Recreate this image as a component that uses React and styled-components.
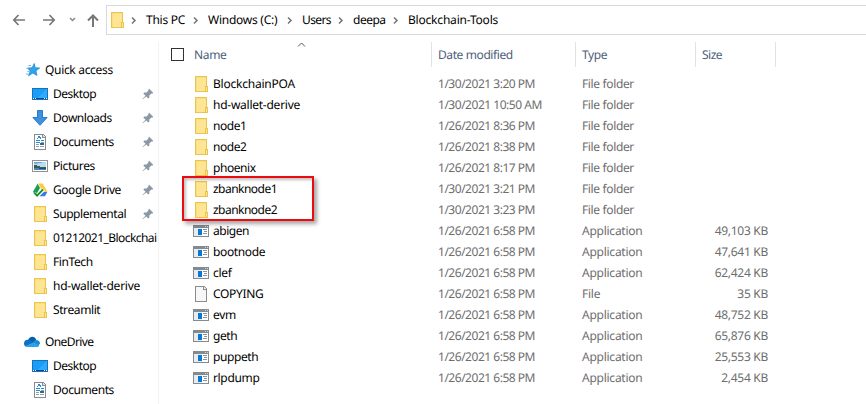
import React from "react";
import styled, { createGlobalStyle } from "styled-components";

const GlobalStyle = createGlobalStyle`
  * { box-sizing: border-box; }
  body { margin: 0; background: #fff; overflow: hidden; }
`;

const Window = styled.div`
  width: 866px;
  height: 404px;
  overflow: hidden;
  display: flex;
  flex-direction: column;
  background: #fff;
  color: #000;
  font: 12px/20px "Noto Sans", "Open Sans", sans-serif;
  text-rendering: geometricPrecision;
  white-space: pre;
`;

const Label = styled.span`
  letter-spacing: ${(p) => p.$track || 0}px;
`;

const Toolbar = styled.header`
  flex: none;
  display: flex;
  height: 42px;
  padding-top: 5px;
`;

const NavButtons = styled.div`
  width: 106px;
  height: 30px;
  flex: none;
`;

const AddressBar = styled.div`
  flex: none;
  display: flex;
  align-items: center;
  width: 770px;
  height: 30px;
  padding-left: 2px;
  border: 1px solid #d9d9d9;
`;

const Crumb = styled.div`
  display: flex;
  align-items: center;
  flex: none;
  width: ${(p) => p.$width}px;
`;

const CrumbArrow = styled.svg`
  flex: none;
  width: 15px;
  height: 16px;
`;

const Body = styled.div`
  flex: 1;
  display: flex;
  min-height: 0;
`;

const Sidebar = styled.nav`
  flex: none;
  width: 159px;
  border-right: 1px solid #f2f2f2;
  padding-top: 16px;
`;

const SideGroup = styled.section`
  margin-bottom: 8px;
`;

const SideRow = styled.div`
  display: flex;
  align-items: center;
  height: 24px;
  padding-left: ${(p) => (p.$root ? 24 : 32)}px;
  padding-right: 1px;
`;

const SideText = styled.div`
  flex: 1;
  min-width: 0;
  margin-left: 5px;
  letter-spacing: ${(p) => p.$track || 0}px;
`;

const Icon = styled.svg`
  display: block;
  flex: none;
  width: 16px;
  height: 16px;
`;

const PinIcon = styled.svg`
  flex: none;
  width: 12px;
  height: 12px;
  margin-right: 3px;
`;

const Main = styled.main`
  position: relative;
  flex: 1;
  min-width: 0;
`;

const columns = "273px 144px 120px 80px";

const HeaderRow = styled.div`
  display: grid;
  grid-template-columns: ${columns};
  height: 25px;
  color: #4c607a;
`;

const HeaderCell = styled.div`
  display: flex;
  align-items: center;
  padding-left: ${(p) => (p.$first ? 12 : 6)}px;
  border-right: 1px solid #e2e2e2;
  letter-spacing: ${(p) => p.$track || 0}px;
`;

const Checkbox = styled.span`
  width: 13px;
  height: 13px;
  border: 1px solid #333;
  margin-right: 10px;
`;

const SortMark = styled.svg`
  position: absolute;
  left: 138px;
  top: 0;
  width: 9px;
  height: 5px;
`;

const FileList = styled.div`
  padding-top: 6px;
`;

const FileRow = styled.div`
  display: grid;
  grid-template-columns: ${columns};
  height: 21px;
  align-items: center;
  color: #6d6d6d;
`;

const NameCell = styled.div`
  display: flex;
  align-items: center;
  gap: 4px;
  padding-left: 34px;
  color: #000;
`;

const Cell = styled.div`
  padding-left: 6px;
  letter-spacing: ${(p) => p.$track || 0}px;
`;

const SizeCell = styled(Cell)`
  padding: 0 8px 0 0;
  text-align: right;
`;

const Highlight = styled.div`
  position: absolute;
  left: 23px;
  top: 134px;
  width: 132px;
  height: 45px;
  border: 2px solid #ec0b10;
  box-shadow: 3px 3px 4px rgba(0, 0, 0, 0.35), inset 2px 2px 3px rgba(0, 0, 0, 0.25);
`;

const Folder = () => (
  <Icon viewBox="0 0 16 16" shapeRendering="crispEdges">
    <path d="M2 0h12v10h1v6H2z" fill="#e9c54d" />
    <path d="M3 1h10v9h-1v5H3z" fill="#fee594" />
    <path d="M3 1h10v1H3zM3 2h1v13H3z" fill="#fdde7e" />
    <path d="M13 11h1v4h-1z" fill="#fde79d" />
  </Icon>
);

const Desktop = () => (
  <Icon viewBox="0 0 16 16" shapeRendering="crispEdges">
    <path d="M0 2h16v12H0z" fill="#1673b8" />
    <path d="M1 3h14v9H1z" fill="#189dfc" />
    <path d="M15 3v9H5z" fill="#34a9fb" />
    <path d="M1 12h14v1H1z" fill="#064b87" />
    <path d="M1 12h1v1H1zM3 12h1v1H3zM12 12h1v1h-1zM14 12h1v1h-1z" fill="#fff" />
  </Icon>
);

const Download = () => (
  <Icon viewBox="0 0 16 16">
    <path d="M5.5.5h5v7h4.6L8 15.3.9 7.5h4.6z" fill="#3c92e1" stroke="#2b7bc7" />
  </Icon>
);

const Document = () => (
  <Icon viewBox="0 0 16 16" shapeRendering="crispEdges">
    <path d="M2 0h9l3 3v13H2z" fill="#858b8f" />
    <path d="M3 1h7v3h3v11H3z" fill="#fff" />
    <path d="M11 1h1v1h1v1h-2z" fill="#e4e5e6" />
    <path d="M6 2h2v2H6zM5 4h1v1H5zM8 3h1v2H8zM4 6h4v1H4zM4 8h4v1H4zM9 6h3v1H9z" fill="#238bd7" />
    <path d="M9 8h3v1H9zM4 10h3v1H4zM4 12h3v1H4zM8 12h4v1H8z" fill="#8fa0ad" />
    <path d="M8 9h4v2H8z" fill="#366789" />
  </Icon>
);

const Pictures = () => (
  <Icon viewBox="0 0 16 16" shapeRendering="crispEdges">
    <path d="M0 2h16v12H0z" fill="#929292" />
    <path d="M1 3h14v10H1z" fill="#fff" />
    <path d="M2 4h12v8H2z" fill="#b9dcf5" />
    <path d="M2 4h8v1H2z" fill="#6a9fe0" />
    <path d="M2 5h4v1H2z" fill="#87b7ec" />
    <path d="M2 7h3v1h3v1h6v1H2z" fill="#365e4b" />
    <path d="M2 10h12v2H2z" fill="#4b83bb" />
    <path d="M7 10h7v1H7z" fill="#244e67" />
  </Icon>
);

const Drive = () => (
  <Icon viewBox="0 0 16 16">
    <path d="M6 1.5h4.7L15.6 10h-4.7z" fill="#ffc944" />
    <path d="M5.6 1.8 8 6 3.5 13.8 1 9.8z" fill="#199c59" />
    <path d="M7.3 10h8L13 14.2H5z" fill="#3b79e4" />
    <path d="m2 11 3.200 3 6.500-6.500" fill="none" stroke="#fff" strokeWidth="3.600" />
    <path d="m2.3 10.6 2.8 3 6-6.200" fill="none" stroke="#159326" strokeWidth="2" />
  </Icon>
);

const Star = () => (
  <Icon viewBox="0 0 16 16">
    <path d="m10.2 1.5 1 4.2 4.5.3-3.7 2.7.9 4.7-4-2.3-4.4 2.7 1.8-4.7L3.5 6l4.6-.2z" fill="#2ea5ed" stroke="#187fc9" strokeWidth=".7" />
    <path d="M4.5 3.5H7M2.5 6.5h2M3.5 9.5h2M2 12h2.5" stroke="#64b7e9" />
  </Icon>
);

const Cloud = () => (
  <Icon viewBox="0 0 16 16">
    <path d="M4 6.2C5.3 1.8 11 1.4 12.4 6.3L8 10z" fill="#0a5cac" />
    <path d="M3.6 5.8C1.5 5.9 0 7.4 0 9.6c0 1.2.5 2.2 1.4 2.8L10 8.6 7 6.8c-1-.7-2.2-1-3.4-1z" fill="#0f6fc5" />
    <path d="M12 6c2.300 0 4 1.500 4 3.500L14 12 9.200 8.300C9.800 6.900 10.800 6 12 6z" fill="#168bdb" />
    <path d="M1.200 12.200 9.300 8.500l5.900 3c-.5 1-1.300 1.500-2.400 1.500H3.600c-1 0-1.800-.3-2.400-.8z" fill="#27a3eb" />
  </Icon>
);

const AppFile = () => (
  <Icon viewBox="0 0 16 16" shapeRendering="crispEdges">
    <path d="M0 2h16v12H0z" fill="#848a8e" />
    <path d="M1 5h14v8H1z" fill="#e9ecef" />
    <path d="M9 5h6v8H9z" fill="#fff" />
    <path d="M12 3h1v1h-1zM14 3h1v1h-1z" fill="#d5d8da" />
    <path d="M5 6h4v6H5z" fill="#0878d8" />
    <path d="M10 6h4v1h-4zM11 8h3v1h-3zM10 10h4v1h-4z" fill="#8c9296" />
  </Icon>
);

const BlankFile = () => (
  <Icon viewBox="0 0 16 16" shapeRendering="crispEdges">
    <path d="M2 0h9l3 3v13H2z" fill="#8c8c8c" />
    <path d="M3 1h7v3h3v11H3z" fill="#f7f7f7" />
    <path d="M11 1h1v1h1v1h-2z" fill="#eee" />
  </Icon>
);

const Pin = () => (
  <PinIcon viewBox="0 0 12 12">
    <path d="m7.200.800 4 4-1 1-.9-.2-2 2 .1 2-1 1L4.200 8.400.900 11.300l-.4-.4 3-3.200L1.300 5.500l1-1 2.200.1 2-2-.3-.8z" fill="#8b99a6" />
  </PinIcon>
);

const ArrowRight = () => (
  <CrumbArrow viewBox="0 0 15 16">
    <path d="m1 5.500 3 3-3 3" fill="none" stroke="#737373" strokeWidth="1.5" />
  </CrumbArrow>
);

const crumbs = [
  ["This PC", 62, -0.25],
  ["Windows (C:)", 94, -0.25],
  ["Users", 51, -0.6],
  ["deepa", 55, -0.5],
  ["Blockchain-Tools", 110, -0.2],
];

const groups = [
  {
    title: "Quick access",
    track: -0.32,
    icon: Star,
    items: [
      ["Desktop", Desktop, -0.5, true],
      ["Downloads", Download, -0.45, true],
      ["Documents", Document, -0.42, true],
      ["Pictures", Pictures, -0.4, true],
      ["Google Drive", Drive, -0.45, true],
      ["Supplemental", Folder, -0.42, true],
      ["01212021_Blockchai", Folder, -0.56],
      ["FinTech", Folder, -0.4],
      ["hd-wallet-derive", Folder, -0.25],
      ["Streamlit", Folder, -0.4],
    ],
  },
  {
    title: "OneDrive",
    track: -0.6,
    icon: Cloud,
    items: [
      ["Desktop", Desktop, -0.5],
      ["Documents", Document, -0.42],
    ],
  },
];

const folder = (name, date, track) => ({
  name,
  date,
  track,
  type: "File folder",
  typeTrack: -0.36,
  icon: Folder,
});
const app = (name, size, track) => ({
  name,
  size,
  track,
  date: "1/26/2021 6:58 PM",
  type: "Application",
  typeTrack: -0.25,
  icon: AppFile,
});

const files = [
  folder("BlockchainPOA", "1/30/2021 3:20 PM", -0.23),
  folder("hd-wallet-derive", "1/30/2021 10:50 AM", -0.25),
  folder("node1", "1/26/2021 8:36 PM", -0.45),
  folder("node2", "1/26/2021 8:38 PM", -0.45),
  folder("phoenix", "1/26/2021 8:17 PM", -0.45),
  folder("zbanknode1", "1/30/2021 3:21 PM", -0.52),
  folder("zbanknode2", "1/30/2021 3:23 PM", -0.52),
  app("abigen", "49,103 KB", -0.45),
  app("bootnode", "47,641 KB", -0.36),
  app("clef", "62,424 KB", -0.3),
  {
    ...app("COPYING", "35 KB", -0.34),
    type: "File",
    icon: BlankFile,
  },
  app("evm", "48,752 KB", -0.25),
  app("geth", "65,876 KB", -0.4),
  app("puppeth", "25,553 KB", -0.4),
  app("rlpdump", "2,454 KB", -0.34),
];

export default function App() {
  return (
    <Window>
      <GlobalStyle />
      <Toolbar>
        <NavButtons>
          <svg width="106" height="30" viewBox="0 0 106 30" fill="none" stroke="#777" strokeWidth="1.700">
            <path d="M25 15H14M18.500 10 13.800 15l4.700 5" />
            <path d="M43 15h11M49.500 10l4.700 5-4.700 5" />
            <path d="m70 13 2.500 2.500L75 13" stroke="#888" strokeWidth="1.500" />
            <path d="M93 22V11M88 15.500l5-5 5 5" strokeWidth="2" />
          </svg>
        </NavButtons>
        <AddressBar>
          <Folder />
          <Crumb $width={6} />
          {crumbs.map(([name, width, track]) => (
            <Crumb key={name} $width={width}>
              <ArrowRight />
              <Label $track={track}>{name}</Label>
            </Crumb>
          ))}
        </AddressBar>
      </Toolbar>
      <Body>
        <Sidebar>
          {groups.map(({ title, track, icon: GroupIcon, items }) => (
            <SideGroup key={title}>
              <SideRow $root>
                <GroupIcon />
                <SideText $track={track}>{title}</SideText>
              </SideRow>
              {items.map(([name, ItemIcon, itemTrack, pinned]) => (
                <SideRow key={name}>
                  <ItemIcon />
                  <SideText $track={itemTrack}>{name}</SideText>
                  {pinned && <Pin />}
                </SideRow>
              ))}
            </SideGroup>
          ))}
        </Sidebar>
        <Main>
          <HeaderRow>
            <HeaderCell $first $track={-0.35}>
              <Checkbox />
              Name
            </HeaderCell>
            <HeaderCell $track={-0.4}>Date modified</HeaderCell>
            <HeaderCell $track={-0.4}>Type</HeaderCell>
            <HeaderCell $track={-0.5}>Size</HeaderCell>
          </HeaderRow>
          <SortMark viewBox="0 0 9 5">
            <path d="M1 4.500 4.500 1 8 4.500" fill="none" stroke="#555" />
          </SortMark>
          <FileList>
            {files.map(({ name, track, date, type, typeTrack, size, icon: FileIcon }) => (
              <FileRow key={name}>
                <NameCell>
                  <FileIcon />
                  <Label $track={track}>{name}</Label>
                </NameCell>
                <Cell $track={-0.48}>{date}</Cell>
                <Cell $track={typeTrack}>{type}</Cell>
                <SizeCell $track={-0.28}>{size}</SizeCell>
              </FileRow>
            ))}
          </FileList>
          <Highlight />
        </Main>
      </Body>
    </Window>
  );
}
